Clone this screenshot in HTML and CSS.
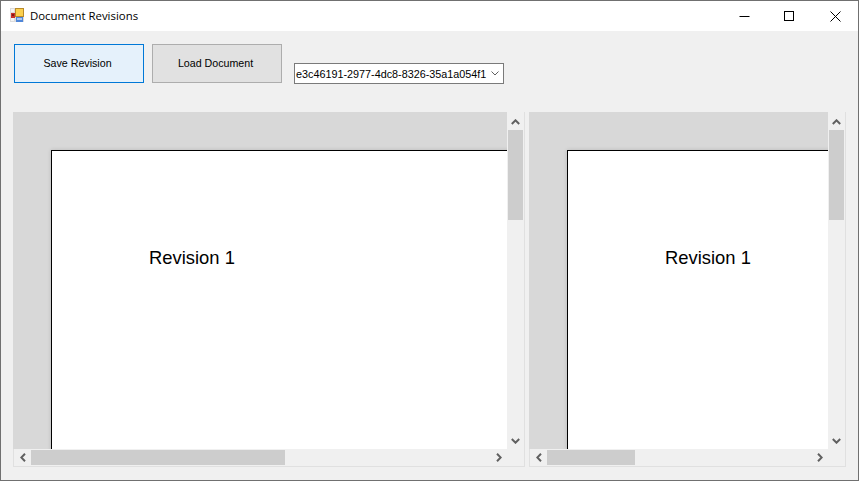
FILE: index.html
```html
<!DOCTYPE html>
<html lang="en">

<head>
    <meta charset="UTF-8" />
    <title>Document Revisions</title>
    <link rel="stylesheet" href="styles.css">
</head>

<body>
    <div class="window">
        <header class="title-bar">
            <svg class="app-icon" width="14" height="14" viewBox="0 0 14 14">
                <rect x="0" y="0" width="14" height="14" fill="#dcdcdc" />
                <rect x="1" y="1" width="3" height="3" fill="#f4f4f4" />
                <rect x="1" y="10" width="3" height="3" fill="#f4f4f4" />
                <rect x="1" y="5" width="4" height="5" fill="#c8302a" />
                <rect x="2" y="6" width="2" height="2" fill="#7d1a18" />
                <rect x="5" y="0" width="9" height="9" fill="#b98a2a" />
                <rect x="6" y="1" width="7" height="7" fill="#fbd04f" />
                <rect x="6" y="9" width="7" height="5" fill="#4f86d8" />
                <rect x="7" y="10" width="5" height="2" fill="#a9c8f2" />
            </svg>
            <span class="window-title">Document Revisions</span>
            <div class="window-controls">
                <span class="control">
                    <svg width="11" height="11" viewBox="0 0 11 11"><path d="M0.5 5.5H10.5" stroke="#000" fill="none" /></svg>
                </span>
                <span class="control">
                    <svg width="11" height="11" viewBox="0 0 11 11"><rect x="0.5" y="0.5" width="9" height="9" stroke="#000" fill="none" /></svg>
                </span>
                <span class="control">
                    <svg width="11" height="11" viewBox="0 0 11 11"><path d="M0.5 0.5L10.5 10.5M10.5 0.5L0.5 10.5" stroke="#000" fill="none" /></svg>
                </span>
            </div>
        </header>

        <section class="toolbar">
            <button class="btn btn-focus">Save Revision</button>
            <button class="btn">Load Document</button>
            <div class="combo">
                <span class="combo-text">e3c46191-2977-4dc8-8326-35a1a054f1</span>
                <svg width="8" height="5" viewBox="0 0 8 5"><path d="M0.5 0.5L4 4L7.5 0.5" stroke="#606060" fill="none" /></svg>
            </div>
        </section>

        <section class="viewers">
            <div class="viewer viewer-left">
                <div class="viewport">
                    <div class="page">Revision 1</div>
                </div>
                <div class="vbar">
                    <span class="arrow"><svg width="9" height="6" viewBox="0 0 9 6"><path d="M0.8 5L4.5 1.3L8.2 5" stroke="#606060" stroke-width="2" fill="none" /></svg></span>
                    <div class="track"><div class="thumb thumb-v"></div></div>
                    <span class="arrow"><svg width="9" height="6" viewBox="0 0 9 6"><path d="M0.8 1L4.5 4.7L8.2 1" stroke="#606060" stroke-width="2" fill="none" /></svg></span>
                </div>
                <div class="hbar">
                    <span class="arrow"><svg width="6" height="9" viewBox="0 0 6 9"><path d="M5 0.8L1.3 4.5L5 8.2" stroke="#606060" stroke-width="2" fill="none" /></svg></span>
                    <div class="track"><div class="thumb thumb-h-wide"></div></div>
                    <span class="arrow"><svg width="6" height="9" viewBox="0 0 6 9"><path d="M1 0.8L4.7 4.5L1 8.2" stroke="#606060" stroke-width="2" fill="none" /></svg></span>
                </div>
                <div class="corner"></div>
            </div>

            <div class="viewer viewer-right">
                <div class="viewport">
                    <div class="page">Revision 1</div>
                </div>
                <div class="vbar">
                    <span class="arrow"><svg width="9" height="6" viewBox="0 0 9 6"><path d="M0.8 5L4.5 1.3L8.2 5" stroke="#606060" stroke-width="2" fill="none" /></svg></span>
                    <div class="track"><div class="thumb thumb-v"></div></div>
                    <span class="arrow"><svg width="9" height="6" viewBox="0 0 9 6"><path d="M0.8 1L4.5 4.7L8.2 1" stroke="#606060" stroke-width="2" fill="none" /></svg></span>
                </div>
                <div class="hbar">
                    <span class="arrow"><svg width="6" height="9" viewBox="0 0 6 9"><path d="M5 0.8L1.3 4.5L5 8.2" stroke="#606060" stroke-width="2" fill="none" /></svg></span>
                    <div class="track"><div class="thumb thumb-h-narrow"></div></div>
                    <span class="arrow"><svg width="6" height="9" viewBox="0 0 6 9"><path d="M1 0.8L4.7 4.5L1 8.2" stroke="#606060" stroke-width="2" fill="none" /></svg></span>
                </div>
                <div class="corner"></div>
            </div>
        </section>
    </div>
</body>

</html>
```

FILE: styles.css
```css
* {
    margin: 0;
    padding: 0;
    box-sizing: border-box;
}

body {
    background: #ffffff;
    font-family: 'Liberation Sans', Arial, sans-serif;
    overflow: hidden;
}

.window {
    width: 859px;
    height: 481px;
    display: flex;
    flex-direction: column;
    background: #f0f0f0;
    border: 1px solid #707070;
}

.title-bar {
    height: 30px;
    display: flex;
    align-items: center;
    background: #ffffff;
    padding-left: 9px;
}

.app-icon {
    flex: none;
    margin-top: -2px;
}

.window-title {
    margin: -2px 0 0 6px;
    font-family: 'Open Sans', 'Noto Sans', sans-serif;
    font-size: 11.4px;
    color: #000000;
}

.window-controls {
    margin-left: auto;
    display: flex;
}

.control {
    width: 45.5px;
    height: 30px;
    display: flex;
    align-items: center;
    justify-content: center;
}

.toolbar {
    height: 81px;
    display: flex;
    align-items: flex-start;
    padding: 13px 0 0 13px;
}

.btn {
    width: 130px;
    height: 39px;
    margin-right: 8px;
    padding: 0 3px 2px 0;
    background: #e1e1e1;
    border: 1px solid #adadad;
    font-family: 'Liberation Sans', Arial, sans-serif;
    font-size: 10.67px;
    color: #000000;
}

.btn-focus {
    background: #e5f1fb;
    border-color: #0078d7;
}

.combo {
    width: 210px;
    height: 21px;
    margin: 19px 0 0 4px;
    display: flex;
    align-items: center;
    justify-content: space-between;
    padding: 0 4px 0 1px;
    background: #ffffff;
    border: 1px solid #7a7a7a;
    font-size: 10.8px;
    white-space: nowrap;
    color: #000000;
}

.viewers {
    display: flex;
    gap: 4px;
    padding-left: 12px;
}

.viewer {
    height: 355px;
    display: grid;
    grid-template-columns: 1fr 17px;
    grid-template-rows: 1fr 17px;
    border: 1px solid #e0e0e0;
    border-width: 0 1px 1px 0;
    background: #f0f0f0;
}

.viewer-left {
    width: 512px;
}

.viewer-right {
    width: 317px;
}

.viewport {
    overflow: hidden;
    background: #d8d8d8;
    padding: 38px 0 0 38px;
}

.page {
    width: 700px;
    height: 500px;
    padding: 96px 0 0 97px;
    background: #ffffff;
    border: 1px solid #000000;
    box-shadow: 0 0 4px rgba(0, 0, 0, 0.15);
    font-size: 18.4px;
    line-height: 22px;
    color: #000000;
}

.vbar,
.hbar {
    display: flex;
    background: #f0f0f0;
}

.vbar {
    flex-direction: column;
    padding: 1px 1px 0;
}

.hbar {
    border-left: 1px solid #e0e0e0;
    padding-top: 1px;
    padding-bottom: 1px;
}

.arrow {
    flex: none;
    width: 17px;
    height: 17px;
    display: flex;
    align-items: center;
    justify-content: center;
}

.vbar .arrow {
    width: 15px;
}

.hbar .arrow {
    height: 15px;
}

.track {
    flex: 1;
}

.thumb {
    background: #cdcdcd;
}

.thumb-v {
    height: 90px;
}

.thumb-h-wide {
    width: 254px;
    height: 100%;
}

.thumb-h-narrow {
    width: 88px;
    height: 100%;
}
```
